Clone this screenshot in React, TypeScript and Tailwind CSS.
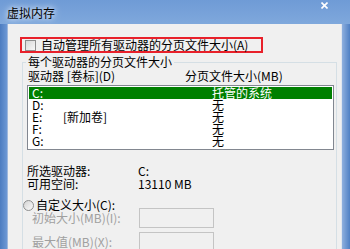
const drives = [
  { letter: 'C:', label: '', size: '托管的系统' },
  { letter: 'D:', label: '', size: '无' },
  { letter: 'E:', label: '[新加卷]', size: '无' },
  { letter: 'F:', label: '', size: '无' },
  { letter: 'G:', label: '', size: '无' },
];

function CheckBox() {
  return (
    <span className="block w-[11px] h-[11px] shrink-0 border border-[#8e8f8f] bg-gradient-to-br from-[#d8d8d8] to-[#f8f8f8]" />
  );
}

function Radio() {
  return (
    <span className="block w-[11px] h-[11px] shrink-0 rounded-full border border-[#8e8f8f] bg-gradient-to-br from-[#d4d4d4] to-[#fafafa]" />
  );
}

export default function App() {
  return (
    <div
      className="w-[350px] h-[249px] overflow-hidden flex flex-col bg-[#5d8bcb] text-[12px] leading-[12px] text-black"
      style={{ fontFamily: '"Noto Sans CJK SC", "Noto Sans", sans-serif' }}
    >
      {/* title bar */}
      <div className="h-[24px] shrink-0 flex justify-between bg-gradient-to-b from-[#6f9bd6] to-[#7fa8dc]">
        <span className="mt-[7px] ml-[7px] h-[13px] [text-shadow:0_0_5px_#e6eefa,0_0_8px_#e6eefa]">虚拟内存</span>
        <svg className="mt-[2px] mr-[22px]" width="7" height="7" viewBox="0 0 7 7">
          <path d="M0.5 0.5 L6.5 6.5 M6.5 0.5 L0.5 6.5" stroke="#ffffff" strokeWidth="1.6" />
        </svg>
      </div>

      <div className="flex flex-1 min-h-0">
        <div className="w-[8px] shrink-0 bg-gradient-to-r from-[#4c7cc0] to-[#6d98d4] border-r border-[#9db7dd]" />

        {/* client area */}
        <div className="flex-1 bg-[#f0f0f0] border-r border-[#dfe6ef] flex flex-col">
          <div className="mt-[13px] ml-[12px] w-[243px] h-[18px] border-2 border-[#e8202a] flex items-center pl-[3px] gap-[5px]">
            <CheckBox />
            <span>自动管理所有驱动器的分页文件大小(A)</span>
          </div>

          <fieldset className="mt-[3px] ml-[14px] w-[315px] h-[220px] shrink-0 border border-[#d5dfe5] p-0">
            <legend className="ml-[3px] px-[2px] leading-[12px]">每个驱动器的分页文件大小</legend>

            <div className="mt-[2px] pl-[5px] flex h-[12px]">
              <span className="w-[157px]">驱动器 [卷标](D)</span>
              <span>分页文件大小(MB)</span>
            </div>

            <div className="mt-[3px] ml-[4px] w-[307px] h-[65px] border border-[#828790] bg-white pt-[1px]">
              {drives.map((d, i) => (
                <div
                  key={d.letter}
                  className={`mx-[1px] h-[12px] flex pl-[3px] ${i === 0 ? 'bg-[#008000] text-white' : ''}`}
                >
                  <span className="w-[180px] flex">
                    <span className="w-[31px]">{d.letter}</span>
                    <span>{d.label}</span>
                  </span>
                  <span>{d.size}</span>
                </div>
              ))}
            </div>

            <div className="mt-[14px] ml-[4px] grid grid-cols-[111px_auto] leading-[13px]">
              <span>所选驱动器:</span>
              <span>C:</span>
              <span>可用空间:</span>
              <span>13110 MB</span>
            </div>

            <div className="mt-[9px] h-[12px] flex items-center gap-[2px]">
              <Radio />
              <span>自定义大小(C):</span>
            </div>

            <div className="mt-[-3px] ml-[9px] flex items-center h-[20px] text-[#a0a0a0]">
              <span className="w-[107px]">初始大小(MB)(I):</span>
              <span className="block w-[75px] h-[20px] border border-[#c4c4c4] bg-[#f0f0f0]" />
            </div>
            <div className="mt-[4px] ml-[9px] flex items-center h-[20px] text-[#a0a0a0]">
              <span className="w-[107px]">最大值(MB)(X):</span>
              <span className="block w-[75px] h-[20px] border border-[#c4c4c4] bg-[#f0f0f0]" />
            </div>
          </fieldset>
        </div>

        <div className="w-[8px] shrink-0 bg-gradient-to-r from-[#8fb0de] to-[#4f80c4]" />
      </div>
    </div>
  );
}
